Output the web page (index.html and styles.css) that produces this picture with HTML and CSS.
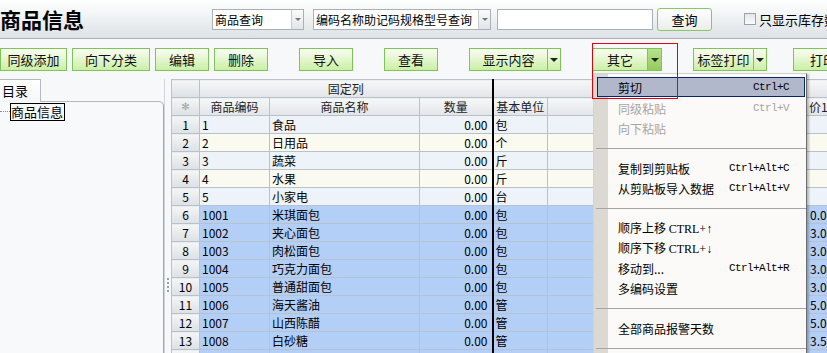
FILE: index.html
```html
<!DOCTYPE html>
<html lang="zh-CN">
<head>
    <meta charset="UTF-8">
    <meta name="viewport" content="width=device-width, initial-scale=1.0">
    <title>商品信息</title>
    <link rel="stylesheet" href="styles.css">
</head>
<body>

    <div id="page">
        <div class="topbar">
            <div class="title">商品信息</div>
            <div class="select sel-type"><span>商品查询</span><i class="arrow"></i></div>
            <div class="select sel-field"><span>编码名称助记码规格型号查询</span><i class="arrow"></i></div>
            <input type="text" class="search">
            <button class="query">查询</button>
            <label class="stock"><span class="check"></span>只显示库存数量</label>
        </div>

        <div class="toolbar">
            <button class="btn btn-add">同级添加</button>
            <button class="btn btn-wide">向下分类</button>
            <button class="btn">编辑</button>
            <button class="btn">删除</button>
            <button class="btn far">导入</button>
            <button class="btn far">查看</button>
            <div class="split far">
                <button class="btn split-main w79">显示内容</button>
                <button class="btn split-arrow"><i class="tri"></i></button>
            </div>
            <div class="split far">
                <button class="btn split-main w56">其它</button>
                <button class="btn split-arrow open"><i class="tri"></i></button>
            </div>
            <div class="split far">
                <button class="btn split-main w61">标签打印</button>
                <button class="btn split-arrow"><i class="tri"></i></button>
            </div>
            <button class="btn last">打印</button>
        </div>

        <div class="main">
            <div class="side">
                <div class="tab">目录</div>
                <div class="panel">
                    <div class="tree"><span class="dots"></span><span class="node">商品信息</span></div>
                </div>
            </div>
            <div class="splitter"><span class="grip"></span></div>
            <div class="grid-wrap">
                <table class="grid">
                    <colgroup>
                        <col style="width:28px">
                        <col style="width:70px">
                        <col style="width:150px">
                        <col style="width:73px">
                        <col style="width:55px">
                        <col style="width:46px">
                        <col style="width:86px">
                        <col style="width:89px">
                        <col style="width:72px">
                    </colgroup>
                    <thead>
                        <tr>
                            <th class="rn"></th>
                            <th colspan="3" class="qty">固定列</th>
                            <th colspan="5"></th>
                        </tr>
                        <tr>
                            <th class="rn star">✻</th>
                            <th>商品编码</th>
                            <th>商品名称</th>
                            <th class="qty">数量</th>
                            <th>基本单位</th>
                            <th></th>
                            <th></th>
                            <th></th>
                            <th class="price-head">价1</th>
                        </tr>
                    </thead>
                    <tbody id="rows"></tbody>
                </table>
            </div>
        </div>

        <div class="menu">
            <div class="mi active"><span>剪切</span><span class="key">Ctrl+C</span></div>
            <div class="mi off"><span>同级粘贴</span><span class="key">Ctrl+V</span></div>
            <div class="mi off"><span>向下粘贴</span></div>
            <div class="sep"></div>
            <div class="mi"><span>复制到剪贴板</span><span class="key">Ctrl+Alt+C</span></div>
            <div class="mi"><span>从剪贴板导入数据</span><span class="key">Ctrl+Alt+V</span></div>
            <div class="sep"></div>
            <div class="mi"><span>顺序上移 <span class="ctl">CTRL+↑</span></span></div>
            <div class="mi"><span>顺序下移 <span class="ctl">CTRL+↓</span></span></div>
            <div class="mi"><span>移动到...</span><span class="key">Ctrl+Alt+R</span></div>
            <div class="mi"><span>多编码设置</span></div>
            <div class="sep"></div>
            <div class="mi"><span>全部商品报警天数</span></div>
            <div class="sep"></div>
        </div>

        <div class="mark"></div>
    </div>

    <script>
        const goods = [
            ['1', '食品', '包', ''],
            ['2', '日用品', '个', ''],
            ['3', '蔬菜', '斤', ''],
            ['4', '水果', '斤', ''],
            ['5', '小家电', '台', ''],
            ['1001', '米琪面包', '包', '0.00'],
            ['1002', '夹心面包', '包', '3.00'],
            ['1003', '肉松面包', '包', '3.00'],
            ['1004', '巧克力面包', '包', '3.00'],
            ['1005', '普通甜面包', '包', '3.00'],
            ['1006', '海天酱油', '管', '5.00'],
            ['1007', '山西陈醋', '管', '5.00'],
            ['1008', '白砂糖', '管', '3.50'],
            ['1009', '红糖', '管', '3.00']
        ];

        const body = document.getElementById('rows');
        goods.forEach((g, index) => {
            const tr = document.createElement('tr');
            if (index >= 5) {
                tr.className = 'picked';
            } else if (index % 2 === 1) {
                tr.className = 'even';
            }
            tr.innerHTML = `<td class="rn">${index + 1}</td>
                            <td>${g[0]}</td>
                            <td>${g[1]}</td>
                            <td class="qty num">0.00</td>
                            <td>${g[2]}</td>
                            <td></td><td></td><td></td>
                            <td class="price">${g[3]}</td>`;
            body.appendChild(tr);
        });
    </script>

</body>
</html>
```

FILE: styles.css
```css
body {
    margin: 0;
    background-color: #f6f8fa;
    font-family: "Noto Sans CJK SC", sans-serif;
    font-size: 12px;
    color: #000;
    overflow: hidden;
}

#page {
    position: relative;
    width: 827px;
    height: 353px;
    overflow: hidden;
}

/* top search bar */
.topbar {
    height: 38px;
    border-bottom: 1px solid #a9b0b7;
    background: linear-gradient(#ffffff, #dde2e6);
    display: flex;
    align-items: center;
    white-space: nowrap;
}

.title {
    width: 212px;
    flex-shrink: 0;
    font-size: 21px;
    font-weight: bold;
    line-height: 24px;
}

.select {
    height: 21px;
    box-sizing: border-box;
    border: 1px solid #a8b0b8;
    background-color: #fff;
    display: flex;
    flex-shrink: 0;
}

.select span {
    flex: 1;
    padding-left: 2px;
    line-height: 19px;
    overflow: hidden;
}

.select .arrow {
    width: 11px;
    border-left: 1px solid #c6cacf;
    background: linear-gradient(#fafafa, #e2e5e8);
    display: flex;
    align-items: center;
    justify-content: center;
}

.select .arrow::after {
    content: "";
    border-left: 3px solid transparent;
    border-right: 3px solid transparent;
    border-top: 3px solid #777;
}

.sel-type {
    width: 92px;
    margin-right: 9px;
}

.sel-field {
    width: 178px;
    margin-right: 6px;
}

.search {
    width: 156px;
    height: 21px;
    box-sizing: border-box;
    border: 1px solid #a8b0b8;
    margin: 0 4px 0 0;
    padding: 0;
    flex-shrink: 0;
}

.query {
    width: 55px;
    height: 23px;
    flex-shrink: 0;
    border: 1px solid #88c862;
    border-radius: 3px;
    background: linear-gradient(#ffffff, #eaeeea);
    font-family: "Noto Sans CJK SC", sans-serif;
    font-size: 13px;
    padding: 0;
    margin-right: 32px;
}

.stock {
    display: flex;
    align-items: center;
    font-size: 13px;
}

.check {
    width: 12px;
    height: 12px;
    box-sizing: border-box;
    border: 1px solid #9aa2aa;
    background: linear-gradient(#e4e6e8, #fbfbfb);
    margin-right: 3px;
}

/* toolbar */
.toolbar {
    height: 40px;
    box-sizing: border-box;
    padding-top: 9px;
    display: flex;
    align-items: flex-start;
    gap: 5px;
    white-space: nowrap;
}

.btn {
    width: 54px;
    height: 23px;
    flex-shrink: 0;
    box-sizing: border-box;
    border: 1px solid #7fc556;
    background: linear-gradient(#fafdf4, #cbefa6);
    font-family: "Noto Sans CJK SC", sans-serif;
    font-size: 13px;
    color: #111;
    padding: 0;
}

.btn-add {
    width: 67px;
}

.btn-wide {
    width: 78px;
}

.far {
    margin-left: 26px;
}

.last {
    width: 60px;
    margin-left: 21px;
}

.split {
    display: flex;
    flex-shrink: 0;
}

.w79 { width: 79px; }
.w56 { width: 56px; }
.w61 { width: 61px; }

.split-arrow {
    width: 13px;
    border-left: none;
    display: flex;
    align-items: center;
    justify-content: center;
}

.split-arrow.open {
    width: 14px;
    background: linear-gradient(#b8e28e, #93cb5e);
}

.tri {
    border-left: 4px solid transparent;
    border-right: 4px solid transparent;
    border-top: 4px solid #222;
}

/* main area */
.main {
    display: flex;
    height: 274px;
}

.side {
    width: 164px;
    flex-shrink: 0;
    display: flex;
    flex-direction: column;
}

.tab {
    position: relative;
    z-index: 1;
    width: 41px;
    height: 23px;
    box-sizing: border-box;
    border-top: 1px solid #b4bac0;
    border-right: 1px solid #b4bac0;
    background: linear-gradient(#ffffff, #f4f6f8);
    font-size: 13px;
    line-height: 21px;
    padding-left: 2px;
    margin-bottom: -1px;
}

.panel {
    flex: 1;
    border-top: 1px solid #b4bac0;
    border-right: 1px solid #9ea6ae;
    border-top-right-radius: 5px;
    background-color: #f7f9fb;
}

.tree {
    display: flex;
    align-items: center;
    height: 19px;
}

.dots {
    width: 10px;
    border-top: 1px dotted #8a8a8a;
}

.node {
    border: 1px solid #000;
    font-size: 13px;
    line-height: 16px;
    padding: 0 1px 0 0;
}

.splitter {
    width: 7px;
    flex-shrink: 0;
    border-left: 1px solid #cfd5db;
    box-sizing: border-box;
    padding: 199px 0 0 2px;
}

.grip {
    display: block;
    width: 2px;
    height: 15px;
    background: repeating-linear-gradient(#98a0a8 0 2px, transparent 2px 4px);
}

.grid-wrap {
    flex: 1;
    overflow: hidden;
}

.grid {
    border-collapse: collapse;
    table-layout: fixed;
    width: 669px;
}

.grid th,
.grid td {
    height: 17px;
    padding: 0 2px;
    border: 1px solid #b9c1ca;
    line-height: 16px;
    white-space: nowrap;
    overflow: hidden;
    font-size: 12px;
}

.grid th {
    font-weight: normal;
    text-align: center;
    background: linear-gradient(#f6f7f8, #e2e5e8);
    color: #222;
}

.grid .rn {
    text-align: center;
    padding: 0;
    background: linear-gradient(#f4f5f6, #dde1e5);
}

.grid .star {
    color: #a0a4a8;
    font-family: "DejaVu Sans", sans-serif;
    font-size: 10px;
}

.grid .qty {
    border-right: 2px solid #000;
}

.grid .num {
    text-align: right;
    padding-right: 4px;
}

.grid .price {
    padding-left: 41px;
}

.grid .price-head {
    text-align: left;
    padding-left: 40px;
}

.grid tbody tr {
    background-color: #eef3f9;
}

.grid tbody tr.even {
    background-color: #fbfaf1;
}

.grid tbody tr.picked {
    background-color: #b3cff8;
}

/* context menu */
.menu {
    position: absolute;
    left: 593px;
    top: 73px;
    z-index: 5;
    width: 214px;
    height: 290px;
    box-sizing: border-box;
    padding-top: 2px;
    border: 1px solid #d6d3cc;
    border-right: 1px solid #6e6e6e;
    background: linear-gradient(to right, #dcd9d2 14px, #fbfaf8 14px);
    box-shadow: 2px 1px 2px rgba(0, 0, 0, 0.25);
}

.mi {
    height: 20px;
    display: flex;
    align-items: center;
    justify-content: space-between;
    padding: 0 17px 0 24px;
    white-space: nowrap;
}

.mi.active {
    height: 18px;
    margin: 1px 1px 1px 3px;
    padding: 0 15px 0 20px;
    border: 1px solid #0a246a;
    background-color: #b1b8cc;
}

.mi.off {
    color: #a6a5a3;
}

.key {
    font-family: "Liberation Mono", monospace;
    font-size: 11px;
    letter-spacing: -0.6px;
}

.ctl {
    font-family: "Liberation Serif", serif;
    font-size: 12px;
}

.sep {
    height: 1px;
    margin: 10px 0 9px 2px;
    background-color: #a4a4a4;
}

/* red highlight drawn over the screenshot */
.mark {
    position: absolute;
    left: 592px;
    top: 43px;
    z-index: 6;
    width: 86px;
    height: 56px;
    box-sizing: border-box;
    border: 1px solid #e0000e;
}
```
